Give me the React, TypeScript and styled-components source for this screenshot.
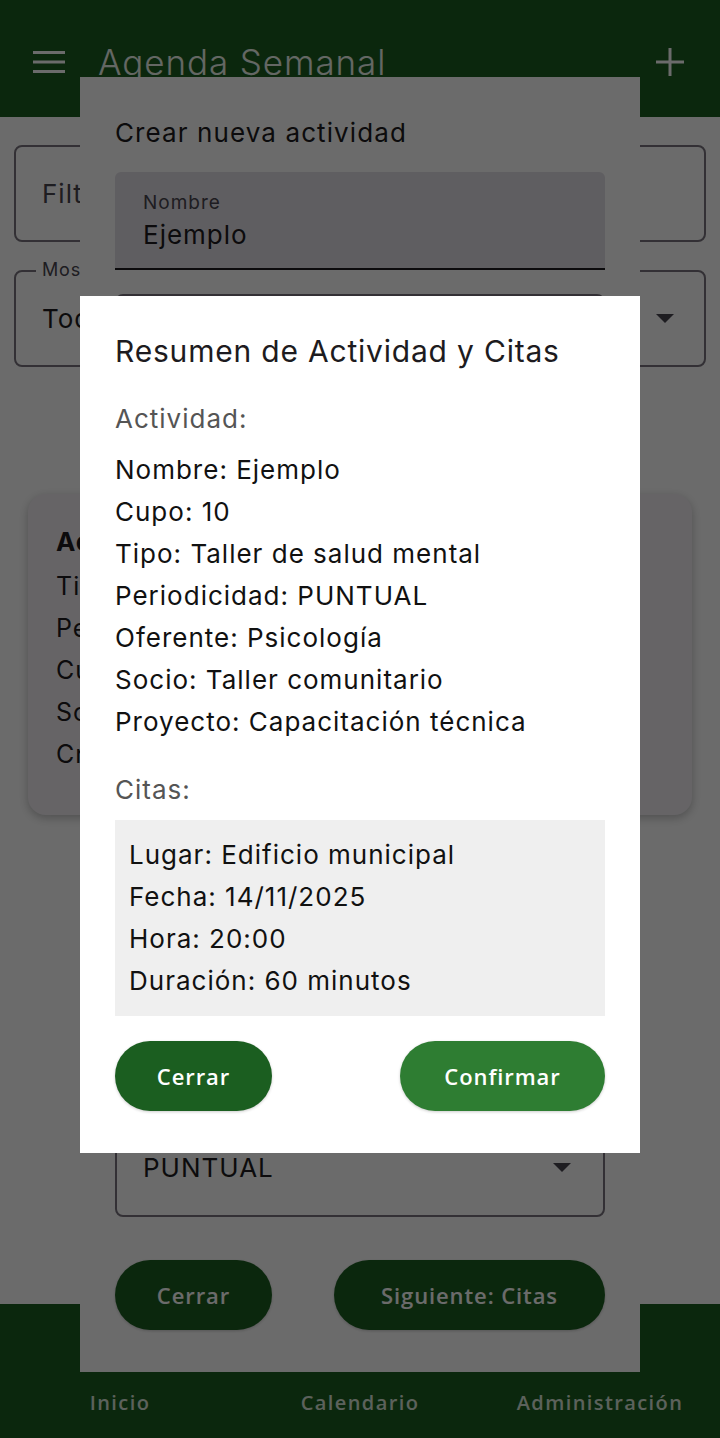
import React from "react";
import styled, { createGlobalStyle } from "styled-components";

const GlobalStyle = createGlobalStyle`
  html, body { margin: 0; padding: 0; }
  body {
    width: 720px;
    height: 1438px;
    overflow: hidden;
    background: #ffffff;
    font-family: "Inter", "Noto Sans", sans-serif;
    color: #1d1b20;
  }
  * { box-sizing: border-box; }
`;

const BODY_FONT = `"Inter", "Noto Sans", sans-serif`;
const UI_FONT = `"Open Sans", "Noto Sans", sans-serif`;

const Screen = styled.div`
  position: relative;
  width: 720px;
  height: 1438px;
  display: flex;
  flex-direction: column;
  background: #ffffff;
  overflow: hidden;
`;

const AppBar = styled.header`
  height: 117px;
  flex: none;
  background: #1b5e20;
  display: flex;
  align-items: center;
  padding: 6px 36px 0 33px;
  gap: 33px;
  color: #ffffff;
`;

const AppTitle = styled.h1`
  flex: 1;
  margin: 0;
  font-family: ${BODY_FONT};
  font-weight: 300;
  font-size: 35px;
  letter-spacing: 0.9px;
  color: #eef5ee;
`;

const IconBox = styled.span`
  display: flex;
  align-items: center;
  justify-content: center;
`;

const Content = styled.main`
  flex: 1;
  display: flex;
  flex-direction: column;
  padding: 28px 14px 0;
`;

const OutlinedBox = styled.div<{ $muted?: boolean }>`
  position: relative;
  height: 97px;
  border: 2px solid #79747e;
  border-radius: 8px;
  display: flex;
  align-items: center;
  justify-content: space-between;
  padding: 0 30px 0 26px;
  font-family: ${BODY_FONT};
  font-size: 26px;
  letter-spacing: 1px;
  color: ${(p) => (p.$muted ? "#49454f" : "#1d1b20")};
  & + & {
    margin-top: 28px;
  }
`;

const FloatLabel = styled.span`
  position: absolute;
  top: -13px;
  left: 20px;
  padding: 0 6px;
  background: #ffffff;
  font-size: 18px;
  letter-spacing: 0.8px;
  color: #49454f;
`;

const Card = styled.section`
  margin: 127px 14px 0;
  padding: 27px 28px 40px;
  border-radius: 18px;
  background: #f3eff4;
  box-shadow: 0 3px 10px rgba(0, 0, 0, 0.25);
  font-family: ${BODY_FONT};
  font-size: 25px;
  letter-spacing: 1px;
`;

const CardTitle = styled.div`
  font-weight: 700;
  line-height: 42px;
  font-size: 26px;
  margin-bottom: 2px;
`;

const CardLine = styled.div`
  line-height: 42px;
`;

const BottomNav = styled.nav`
  height: 134px;
  flex: none;
  background: #1b5e20;
  display: grid;
  grid-template-columns: 1fr 1fr 1fr;
  align-items: end;
  padding: 0 0 22px;
`;

const NavLabel = styled.span`
  text-align: center;
  font-family: ${UI_FONT};
  font-weight: 600;
  font-size: 20px;
  letter-spacing: 1.4px;
  color: #dbe8db;
`;

const Layer = styled.div<{ $scrim?: boolean }>`
  position: absolute;
  inset: 0;
  display: flex;
  align-items: center;
  justify-content: center;
  padding-top: 10px;
  background: ${(p) => (p.$scrim ? "rgba(0, 0, 0, 0.58)" : "transparent")};
`;

const Dialog = styled.div<{ $height?: number }>`
  width: 560px;
  height: ${(p) => (p.$height ? `${p.$height}px` : "auto")};
  background: #ffffff;
  display: flex;
  flex-direction: column;
  padding: 35px 35px 42px;
  font-family: ${BODY_FONT};
  color: #1d1b20;
`;

const DialogTitle = styled.h2<{ $size: number; $lh: number; $ls: number }>`
  margin: 0;
  font-weight: 400;
  font-size: ${(p) => p.$size}px;
  line-height: ${(p) => p.$lh}px;
  letter-spacing: ${(p) => p.$ls}px;
  color: #1d1b20;
`;

const FilledField = styled.div`
  margin-top: 18px;
  height: 98px;
  flex: none;
  background: #e3dfe6;
  border-bottom: 2px solid #1d1b20;
  border-radius: 6px 6px 0 0;
  display: flex;
  flex-direction: column;
  justify-content: center;
  padding: 4px 28px 0;
`;

const FieldLabel = styled.span`
  font-size: 19px;
  line-height: 26px;
  letter-spacing: 1px;
  color: #49454f;
`;

const FieldValue = styled.span`
  font-size: 26px;
  line-height: 38px;
  letter-spacing: 1px;
  color: #1d1b20;
`;

const HiddenStack = styled.div`
  flex: 1;
  display: flex;
  flex-direction: column;
  gap: 24px;
  padding-top: 24px;
  overflow: hidden;
`;

const SelectBox = styled.div`
  height: 98px;
  flex: none;
  border: 2px solid #79747e;
  border-radius: 8px;
  display: flex;
  align-items: center;
  justify-content: space-between;
  padding: 0 32px 0 26px;
  font-size: 26px;
  letter-spacing: 1px;
  color: #1d1b20;
`;

const ButtonRow = styled.div<{ $gap: number }>`
  margin-top: ${(p) => p.$gap}px;
  display: flex;
  justify-content: space-between;
`;

const PillButton = styled.button<{ $width: number; $tone: "dark" | "mid" }>`
  width: ${(p) => p.$width}px;
  height: 70px;
  border: none;
  border-radius: 35px;
  background: ${(p) => (p.$tone === "dark" ? "#1b5e20" : "#2e7d32")};
  color: #ffffff;
  font-family: ${UI_FONT};
  font-weight: 600;
  font-size: 22px;
  letter-spacing: 0.9px;
  padding: 0;
  box-shadow: 0 1px 3px rgba(0, 0, 0, 0.2);
`;

const SectionLabel = styled.div<{ $top: number }>`
  margin-top: ${(p) => p.$top}px;
  font-size: 26px;
  line-height: 42px;
  letter-spacing: 1px;
  color: #555555;
`;

const InfoList = styled.div<{ $top: number }>`
  margin-top: ${(p) => p.$top}px;
  display: flex;
  flex-direction: column;
`;

const InfoLine = styled.div`
  font-size: 26px;
  line-height: 42px;
  letter-spacing: 1px;
  color: #111111;
`;

const CitaBox = styled.div`
  margin-top: 9px;
  background: #efefef;
  padding: 14px 14px;
`;

const Caret = () => (
  <svg width="18" height="10" viewBox="0 0 18 10">
    <polygon points="0,0 18,0 9,9" fill="#49454f" />
  </svg>
);

const MenuIcon = () => (
  <svg width="32" height="24" viewBox="0 0 32 24">
    <rect x="0" y="1" width="32" height="3" fill="#ffffff" />
    <rect x="0" y="10.5" width="32" height="3" fill="#ffffff" />
    <rect x="0" y="20" width="32" height="3" fill="#ffffff" />
  </svg>
);

const PlusIcon = () => (
  <svg width="28" height="28" viewBox="0 0 28 28">
    <rect x="12.5" y="0" width="3" height="28" fill="#ffffff" />
    <rect x="0" y="12.5" width="28" height="3" fill="#ffffff" />
  </svg>
);

const actividad = [
  "Nombre: Ejemplo",
  "Cupo: 10",
  "Tipo: Taller de salud mental",
  "Periodicidad: PUNTUAL",
  "Oferente: Psicología",
  "Socio: Taller comunitario",
  "Proyecto: Capacitación técnica",
];

const cita = [
  "Lugar: Edificio municipal",
  "Fecha: 14/11/2025",
  "Hora: 20:00",
  "Duración: 60 minutos",
];

const hiddenFields = ["cupo", "tipo", "oferente", "socio", "proyecto"];

export default function App() {
  return (
    <>
      <GlobalStyle />
      <Screen>
        <AppBar>
          <IconBox>
            <MenuIcon />
          </IconBox>
          <AppTitle>Agenda Semanal</AppTitle>
          <IconBox>
            <PlusIcon />
          </IconBox>
        </AppBar>
        <Content>
          <OutlinedBox $muted>Filtrar por nombre</OutlinedBox>
          <OutlinedBox>
            <FloatLabel>Mostrar</FloatLabel>
            Todas las actividades
            <Caret />
          </OutlinedBox>
          <Card>
            <CardTitle>Actividad de prueba</CardTitle>
            <CardLine>Tipo: Taller de salud mental</CardLine>
            <CardLine>Periodicidad: SEMANAL</CardLine>
            <CardLine>Cupo: 20</CardLine>
            <CardLine>Socio: Taller comunitario</CardLine>
            <CardLine>Creado por: Administración</CardLine>
          </Card>
        </Content>
        <BottomNav>
          <NavLabel>Inicio</NavLabel>
          <NavLabel>Calendario</NavLabel>
          <NavLabel>Administración</NavLabel>
        </BottomNav>

        <Layer>
          <Dialog $height={1295}>
            <DialogTitle $size={26} $lh={42} $ls={1.1}>
              Crear nueva actividad
            </DialogTitle>
            <FilledField>
              <FieldLabel>Nombre</FieldLabel>
              <FieldValue>Ejemplo</FieldValue>
            </FilledField>
            <HiddenStack>
              {hiddenFields.map((f) => (
                <SelectBox key={f} />
              ))}
            </HiddenStack>
            <SelectBox>
              PUNTUAL
              <Caret />
            </SelectBox>
            <ButtonRow $gap={43}>
              <PillButton $width={157} $tone="dark">
                Cerrar
              </PillButton>
              <PillButton $width={271} $tone="dark">
                Siguiente: Citas
              </PillButton>
            </ButtonRow>
          </Dialog>
        </Layer>

        <Layer $scrim>
          <Dialog>
            <DialogTitle $size={30} $lh={41} $ls={0.8}>
              Resumen de Actividad y Citas
            </DialogTitle>
            <SectionLabel $top={26}>Actividad:</SectionLabel>
            <InfoList $top={9}>
              {actividad.map((l) => (
                <InfoLine key={l}>{l}</InfoLine>
              ))}
            </InfoList>
            <SectionLabel $top={26}>Citas:</SectionLabel>
            <CitaBox>
              {cita.map((l) => (
                <InfoLine key={l}>{l}</InfoLine>
              ))}
            </CitaBox>
            <ButtonRow $gap={25}>
              <PillButton $width={157} $tone="dark">
                Cerrar
              </PillButton>
              <PillButton $width={205} $tone="mid">
                Confirmar
              </PillButton>
            </ButtonRow>
          </Dialog>
        </Layer>
      </Screen>
    </>
  );
}
